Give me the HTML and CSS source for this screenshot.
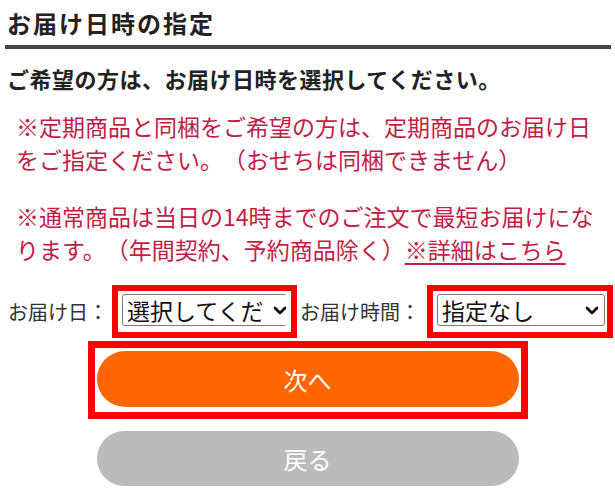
FILE: index.html
```html
<!DOCTYPE html>
<html lang="ja">
<head>
<meta charset="utf-8">
<link rel="stylesheet" href="styles.css">
</head>
<body>
<div class="page">
  <h2 class="title">お届け日時の指定</h2>
  <p class="lead">ご希望の方は、お届け日時を選択してください。</p>
  <p class="note">※定期商品と同梱をご希望の方は、定期商品のお届け日をご指定ください。（おせちは同梱できません）</p>
  <p class="note note2">※通常商品は当日の14時までのご注文で最短お届けになります。（年間契約、予約商品除く）<a class="link" href="#">※詳細はこちら</a></p>
  <div class="pick-row">
    <span class="pick-label">お届け日：</span>
    <span class="hl hl-date">
      <span class="sel-wrap">
        <select class="sel"><option>選択してください</option></select>
        <span class="chev-box"><svg class="chev" width="14" height="9" viewBox="0 0 14 9"><path d="M2 2 L7 7 L12 2" fill="none" stroke="#000" stroke-width="2.6" stroke-linecap="round" stroke-linejoin="round"/></svg></span>
      </span>
    </span>
    <span class="pick-label label-time">お届け時間：</span>
    <span class="hl hl-time">
      <span class="sel-wrap">
        <select class="sel"><option>指定なし</option></select>
        <span class="chev-box"><svg class="chev" width="14" height="9" viewBox="0 0 14 9"><path d="M2 2 L7 7 L12 2" fill="none" stroke="#000" stroke-width="2.6" stroke-linecap="round" stroke-linejoin="round"/></svg></span>
      </span>
    </span>
  </div>
  <div class="btns">
    <div class="hl-btn"><button class="btn btn-next">次へ</button></div>
    <button class="btn btn-back">戻る</button>
  </div>
</div>
</body>
</html>
```

FILE: styles.css
```css
html, body {
  margin: 0;
  padding: 0;
  background: #fff;
}
body {
  font-family: "Noto Sans CJK JP", "Noto Sans", sans-serif;
  color: #222;
  text-spacing-trim: space-all;
}
.page {
  width: 615px;
}
.title {
  margin: 7px 4px 0 5px;
  padding: 0 0 6px 2px;
  font-size: 24px;
  line-height: 32px;
  font-weight: 700;
  letter-spacing: 2px;
  color: #222;
  border-bottom: 4px solid #474747;
}
.lead {
  margin: 14px 0 0 0;
  padding-left: 7px;
  font-size: 22px;
  line-height: 30px;
  font-weight: 700;
  letter-spacing: 0.5px;
  color: #222;
}
.note {
  margin: 17px 0 0 0;
  padding: 0 17px 0 16px;
  font-size: 23px;
  line-height: 33px;
  color: #c21d45;
}
.note2 {
  margin-top: 24px;
}
.link {
  color: #c21d45;
  text-decoration: underline;
  text-underline-offset: 4px;
}
.pick-row {
  display: flex;
  align-items: center;
  margin-top: 19px;
  padding-left: 8px;
}
.pick-label {
  font-size: 20px;
  line-height: 28px;
  color: #333;
  margin-right: 4px;
}
.label-time {
  margin-left: 3px;
  margin-right: 7px;
}
.hl {
  display: flex;
  border: 6px solid #ff0000;
  padding: 3px 0 6px 4px;
}
.hl-date {
  width: 169px;
}
.hl-time {
  width: 168px;
  padding-right: 2px;
}
.sel-wrap {
  position: relative;
  display: block;
  width: 100%;
}
.sel {
  -webkit-appearance: none;
  appearance: none;
  display: block;
  width: 100%;
  height: 32px;
  box-sizing: border-box;
  border: 1px solid #7a7a7a;
  border-radius: 3px;
  background: #fff;
  font-family: "Noto Sans CJK JP", sans-serif;
  font-size: 23px;
  line-height: 30px;
  color: #111;
  padding: 0 20px 0 4px;
  margin: 0;
}
.hl-date .sel {
  width: 165px;
}
.chev-box {
  position: absolute;
  right: 1px;
  top: 1px;
  bottom: 1px;
  width: 20px;
  background: #fff;
  border-radius: 0 2px 2px 0;
  display: flex;
  align-items: center;
  justify-content: center;
  pointer-events: none;
}
.hl-time .chev-box {
  right: 3px;
}
.btns {
  display: flex;
  flex-direction: column;
  align-items: center;
  margin-top: 3px;
}
.hl-btn {
  border: 7px solid #ff0000;
  padding: 3px 2px 5px 2px;
}
.btn {
  display: block;
  width: 422px;
  height: 56px;
  border: none;
  border-radius: 28px;
  font-family: "Noto Sans CJK JP", sans-serif;
  font-size: 24px;
  font-weight: 400;
  color: #fff;
  padding: 0;
  margin: 0;
}
.btn-next {
  background: #ff6600;
}
.btn-back {
  background: #bbbbbb;
  height: 55px;
  margin-top: 12px;
}
```
